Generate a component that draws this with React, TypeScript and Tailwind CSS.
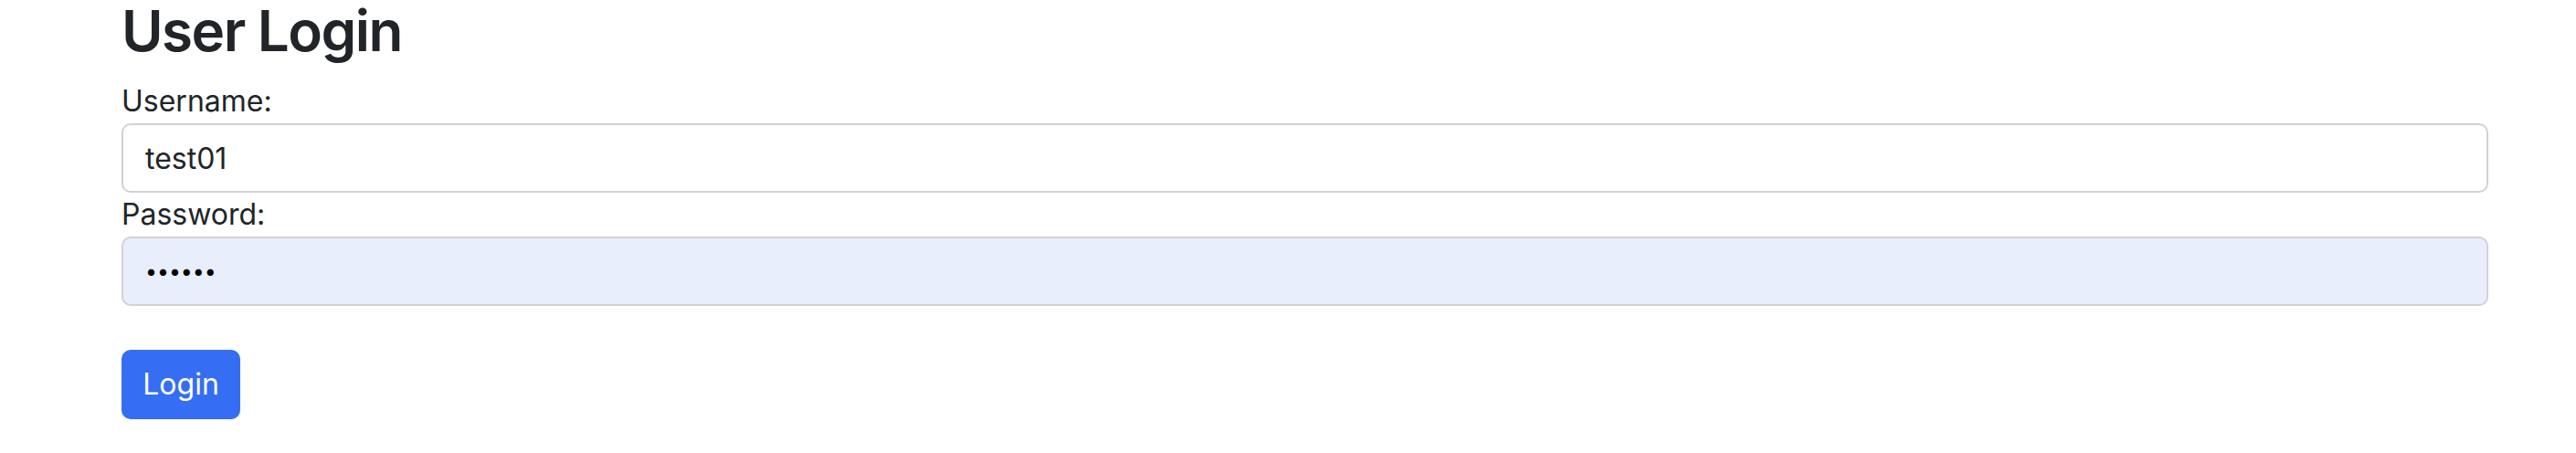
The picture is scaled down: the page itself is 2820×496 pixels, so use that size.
export default function App() {
  return (
    <div className="min-h-screen bg-white font-['Inter','Liberation_Sans',sans-serif] text-[#212529]">
      <div className="ml-[133px] w-[2591px]">
        {/* Header */}
        <h2 className="text-[62px] font-semibold leading-[67px] tracking-[-0.025em] mb-[20px]">User Login</h2>

        <form className="flex flex-col" onSubmit={(e) => e.preventDefault()}>
          <label htmlFor="username" className="text-[32px] leading-[48px]">Username:</label>
          <input
            id="username"
            type="text"
            defaultValue="test01"
            className="h-[76px] w-full rounded-[10px] border-2 border-[#d1d1d8] bg-white px-[24px] text-[32px] text-[#212529] outline-none"
          />

          <label htmlFor="password" className="text-[32px] leading-[48px]">Password:</label>
          <input
            id="password"
            type="password"
            defaultValue="secret"
            className="h-[76px] w-full rounded-[10px] border-2 border-[#d1d1d8] bg-[#e9eefd] px-[24px] text-[23px] text-black outline-none"
          />

          <div className="mt-[48px]">
            <button
              type="submit"
              className="h-[76px] w-[130px] rounded-[10px] bg-[#356ef2] text-[32px] text-white"
            >
              Login
            </button>
          </div>
        </form>
      </div>
    </div>
  );
}
